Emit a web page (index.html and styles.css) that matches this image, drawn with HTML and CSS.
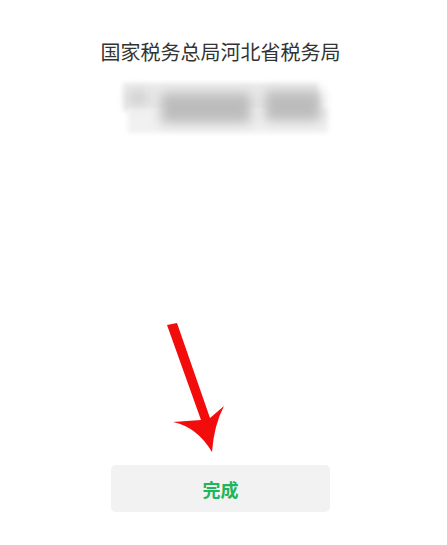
FILE: index.html
```html
<!DOCTYPE html>
<html lang="zh-CN">
<head>
<meta charset="UTF-8">
<meta name="viewport" content="width=device-width, initial-scale=1.0">
<title>完成</title>
<link rel="stylesheet" href="styles.css">
</head>
<body>
    <div class="page">
        <h1 class="org-name">国家税务总局河北省税务局</h1>
        <div class="masked">
            <div class="base base-top"></div>
            <div class="base base-bottom"></div>
            <div class="blob blob-a"></div>
            <div class="blob blob-b"></div>
            <div class="blob blob-c"></div>
        </div>
        <div class="spacer">
            <svg class="arrow" width="80" height="145" viewBox="0 0 80 145">
                <path d="M16 15 L26 13 L59 108 L73 96 Q63 115 61 142 Q46 117 22 112 L50 110 Z" fill="#f20c0c"/>
            </svg>
        </div>
        <div class="actions">
            <button class="done-btn">完成</button>
        </div>
    </div>
</body>
</html>
```
FILE: styles.css
```css
body {
    margin: 0;
    padding: 0;
    background-color: #fff;
    font-family: "Noto Sans CJK SC", "Noto Sans", sans-serif;
}
.page {
    width: 447px;
    height: 545px;
    display: flex;
    flex-direction: column;
    align-items: center;
}
.org-name {
    margin: 38px 6px 0 0;
    font-size: 20px;
    font-weight: normal;
    color: #333;
    line-height: 28px;
}
.masked {
    position: relative;
    width: 205px;
    height: 50px;
    margin-top: 17px;
    margin-left: 4px;
}
.base {
    position: absolute;
    background-color: #ebebeb;
    filter: blur(2px);
}
.base-top {
    left: 0;
    top: 0;
    width: 195px;
    height: 28px;
}
.base-bottom {
    left: 5px;
    top: 26px;
    width: 200px;
    height: 24px;
    background-color: #f1f1f1;
}
.blob {
    position: absolute;
    background-color: #bcbcbc;
    filter: blur(6px);
}
.blob-a {
    left: 5px;
    top: 8px;
    width: 20px;
    height: 14px;
    background-color: #cfcfcf;
}
.blob-b {
    left: 38px;
    top: 10px;
    width: 90px;
    height: 30px;
}
.blob-c {
    left: 142px;
    top: 8px;
    width: 56px;
    height: 30px;
}
.spacer {
    flex: 1;
    width: 100%;
    position: relative;
}
.arrow {
    position: absolute;
    left: 151px;
    top: 177px;
}
.actions {
    padding-bottom: 33px;
    margin-right: 6px;
}
.done-btn {
    width: 219px;
    height: 47px;
    border: none;
    border-radius: 5px;
    background-color: #f2f2f2;
    color: #20b55a;
    font-family: "Noto Sans CJK SC", sans-serif;
    font-size: 18px;
    font-weight: bold;
    cursor: pointer;
}
```
